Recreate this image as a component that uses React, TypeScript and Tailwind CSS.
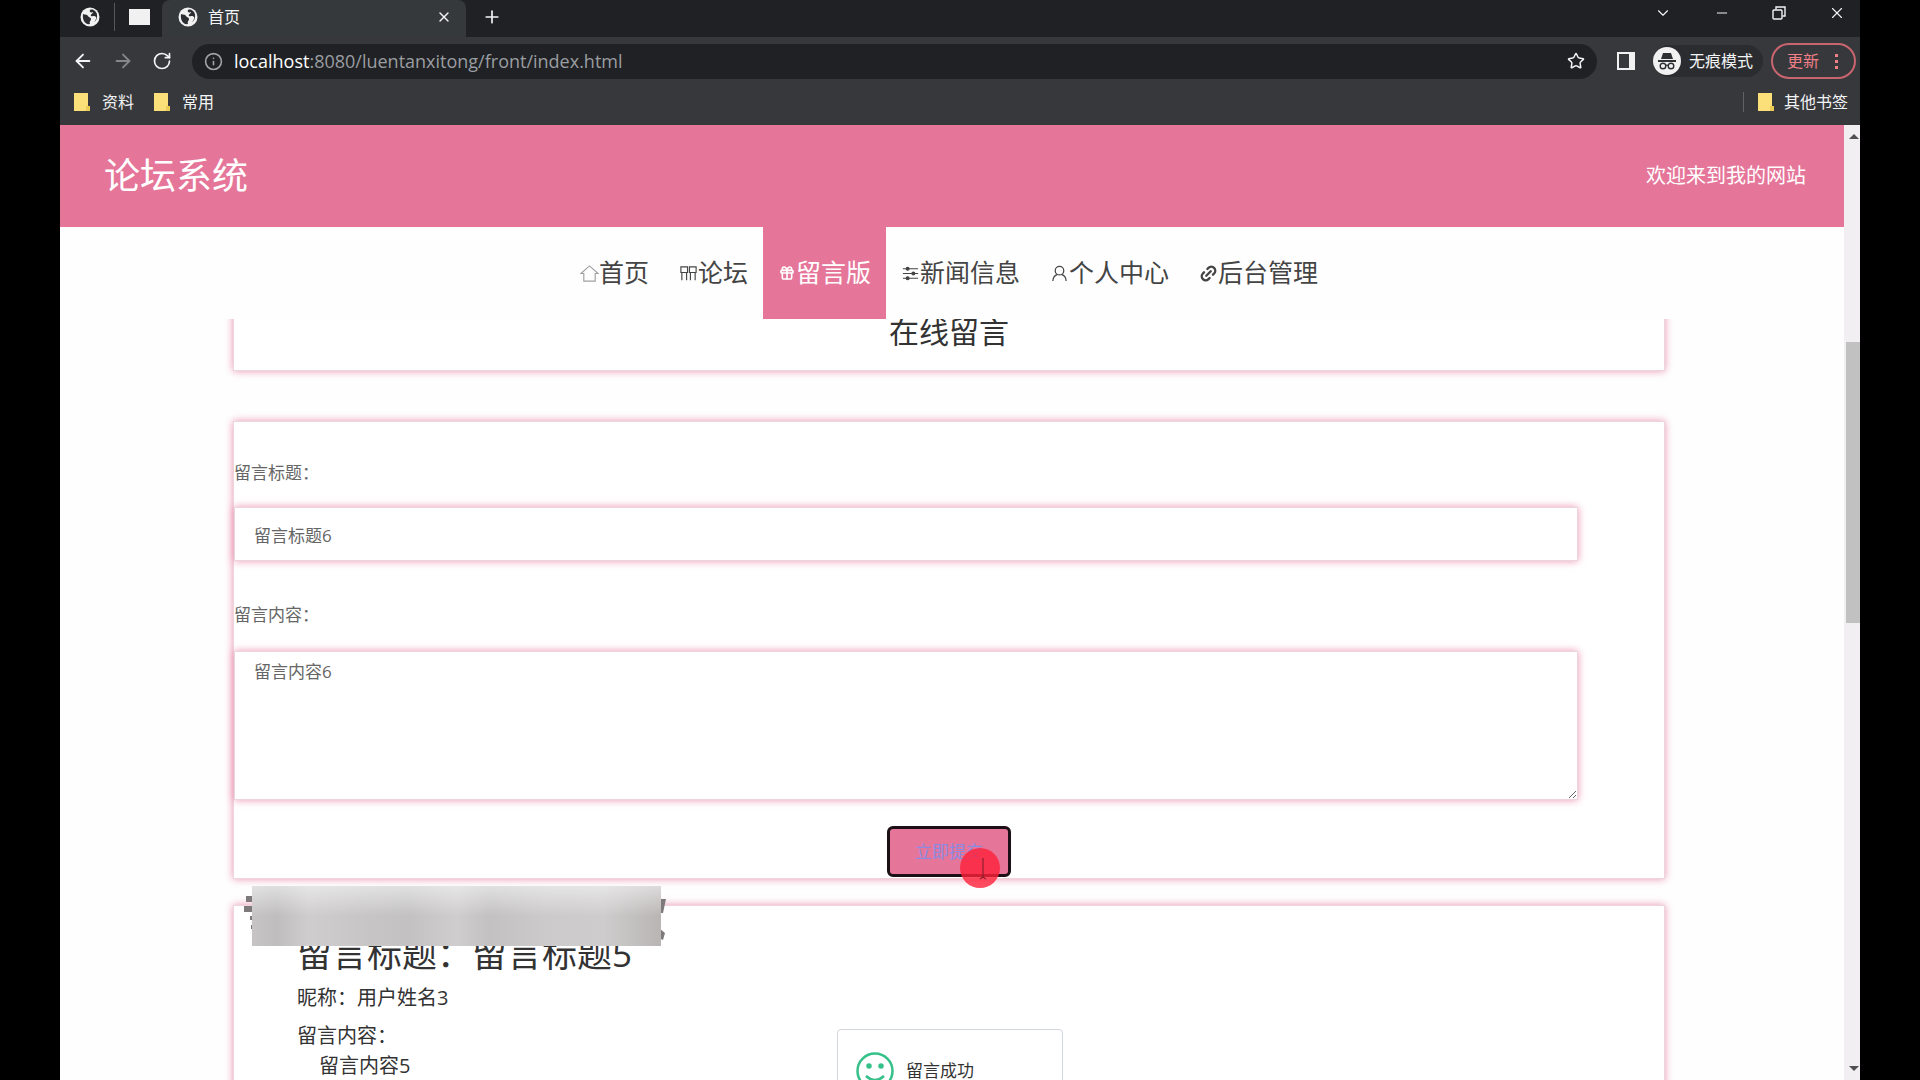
import { useState } from 'react';
import type { ReactNode } from 'react';
import {
  ArrowLeft,
  ArrowRight,
  ChevronDown,
  Gift,
  Info,
  Link2,
  Minus,
  Plus,
  RotateCw,
  Star,
  X,
} from 'lucide-react';

const cardShadow = 'shadow-[0_0_8px_#eb95af] border border-[#ecd5dc]';

function GlobeIcon() {
  return (
    <svg viewBox="0 0 20 20" className="size-5 shrink-0">
      <circle cx="10" cy="10" r="9.5" fill="#f1f1f1" />
      <path d="M3 7c2 1 4 0 5 2s3 1 3 3-2 2-1 5c-4 1-8-3-7-10z" fill="#2b2d30" />
      <path d="M10 3c-1 2 1 3 3 2 0 2-3 2-2 4 2 1 3-1 5 1 1 1-1 4-2 5 4-2 4-9 1-11-1-1-3-2-5-1z" fill="#2b2d30" />
    </svg>
  );
}

function FolderIcon() {
  return (
    <svg viewBox="0 0 16 18" className="h-[18px] w-4 shrink-0">
      <path d="M0 0h14v13h2v5H0z" fill="#fbe07a" />
      <path d="M12 13h4v5h-4z" fill="#eccb55" />
    </svg>
  );
}

function IncognitoIcon() {
  return (
    <svg viewBox="0 0 28 28" className="size-7 shrink-0">
      <circle cx="14" cy="14" r="14" fill="#f1f1f1" />
      <path d="M10 6h8l2 6H8zM5 13h18v2H5z" fill="#2e2f33" />
      <g fill="none" stroke="#2e2f33" strokeWidth="1.4">
        <circle cx="10" cy="19" r="2.8" />
        <circle cx="18" cy="19" r="2.8" />
        <path d="M12.8 18.5q1.2-.8 2.4 0" />
      </g>
    </svg>
  );
}

function RestoreIcon() {
  return (
    <svg viewBox="0 0 14 14" className="size-3.5" fill="none" stroke="currentColor" strokeWidth="1.4">
      <rect x="1" y="4" width="9" height="9" rx="1" />
      <path d="M4 3.5V1h9v9h-2.5" />
    </svg>
  );
}

function HomeIcon() {
  return (
    <svg viewBox="0 0 20 20" className="size-[19px]" fill="none" stroke="#a0a0a0" strokeWidth="1.2">
      <path d="M1 10l9-8 9 8h-3v8H4v-8z" />
    </svg>
  );
}

function ForumIcon() {
  return (
    <svg viewBox="0 0 20 20" className="size-[19px]" fill="none" stroke="currentColor" strokeWidth="1.2">
      <path d="M2 3h7v6H2zM11 3h7v6h-7zM3 9v8M8 9v8M12 9v8M17 9v8" />
    </svg>
  );
}

function SlidersIcon() {
  return (
    <svg viewBox="0 0 20 20" className="size-[19px]" stroke="currentColor" strokeWidth="1.2">
      <path d="M2 5h16M2 10h16M2 15h16" />
      <g fill="currentColor">
        <circle cx="7" cy="5" r="1.5" />
        <circle cx="13" cy="10" r="1.5" />
        <circle cx="7" cy="15" r="1.5" />
      </g>
    </svg>
  );
}

function PersonIcon() {
  return (
    <svg viewBox="0 0 20 20" className="size-[19px]" fill="none" stroke="currentColor" strokeWidth="1.3">
      <circle cx="10" cy="7" r="4.5" />
      <path d="M3 18c0-4 2-6 5-7M17 18c0-4-2-6-5-7" />
    </svg>
  );
}

const navItems: { label: string; icon: ReactNode }[] = [
  { label: '首页', icon: <HomeIcon /> },
  { label: '论坛', icon: <ForumIcon /> },
  { label: '留言版', icon: <Gift className="mx-px size-4" strokeWidth={2.5} /> },
  { label: '新闻信息', icon: <SlidersIcon /> },
  { label: '个人中心', icon: <PersonIcon /> },
  { label: '后台管理', icon: <Link2 className="size-[19px] -rotate-45" strokeWidth={3} /> },
];

function BrowserChrome() {
  return (
    <div className="shrink-0 bg-[#37383b] text-base text-gray-100">
      {/* Tab strip */}
      <div className="flex h-[37px] items-stretch bg-[#202124]">
        <div className="flex w-[102px] items-center pb-1 pl-5">
          <GlobeIcon />
          <span className="ml-3.5 h-7 w-px bg-[#55575b]" />
          <span className="ml-3.5 h-4 w-[21px] bg-[#f1f1f1]" />
        </div>
        <div className="flex w-[304px] items-center rounded-t-lg bg-[#35393b] pr-3.5 pb-1 pl-4">
          <GlobeIcon />
          <span className="ml-2.5 flex-1">首页</span>
          <button aria-label="关闭标签页">
            <X className="size-4" />
          </button>
        </div>
        <button aria-label="新标签页" className="mb-1 ml-4">
          <Plus className="size-5" />
        </button>
        <div className="mb-3 ml-auto flex items-center gap-[42px] pr-3.5">
          <button aria-label="搜索标签页">
            <ChevronDown className="size-[18px]" strokeWidth={1.5} />
          </button>
          <button aria-label="最小化">
            <Minus className="size-4" strokeWidth={1.5} />
          </button>
          <button aria-label="还原">
            <RestoreIcon />
          </button>
          <button aria-label="关闭">
            <X className="size-[18px]" strokeWidth={1.5} />
          </button>
        </div>
      </div>

      {/* Toolbar */}
      <div className="flex h-12 items-center pr-1 pl-3">
        <button aria-label="后退">
          <ArrowLeft className="size-[22px]" />
        </button>
        <button aria-label="前进" className="ml-4.5 text-[#85878a]">
          <ArrowRight className="size-[22px]" />
        </button>
        <button aria-label="刷新" className="ml-4.5">
          <RotateCw className="size-5" />
        </button>
        <div className="ml-5 flex h-[35px] flex-1 items-center rounded-full bg-[#202124] px-3">
          <Info className="size-[19px] text-[#a3a5a8]" />
          <span className="ml-[11px] flex-1 text-lg text-[#9a9da1]">
            <span className="text-white">localhost</span>:8080/luentanxitong/front/index.html
          </span>
          <button aria-label="收藏">
            <Star className="size-[18px]" />
          </button>
        </div>
        <span className="ml-5 h-[18px] w-[18px] border-2 border-r-[6px] border-[#f1f1f1]" />
        <div className="ml-[18px] flex h-8 items-center rounded-full bg-[#2b2c2f] pr-2.5">
          <IncognitoIcon />
          <span className="ml-2">无痕模式</span>
        </div>
        <button className="ml-2 flex h-9 items-center rounded-full border-2 border-[#c9656f] pr-4 pl-3.5 text-[#f07f88]">
          更新
          <span className="ml-4 flex flex-col gap-[3px]">
            <span className="size-[3px] bg-[#f07f88]" />
            <span className="size-[3px] bg-[#f07f88]" />
            <span className="size-[3px] bg-[#f07f88]" />
          </span>
        </button>
      </div>

      {/* Bookmarks */}
      <div className="flex h-10 items-center pr-3 pb-1.5 pl-3.5">
        <FolderIcon />
        <span className="mr-5 ml-3">资料</span>
        <FolderIcon />
        <span className="ml-3">常用</span>
        <span className="mr-3.5 ml-auto h-5 w-px bg-[#5f6165]" />
        <FolderIcon />
        <span className="ml-2.5">其他书签</span>
      </div>
    </div>
  );
}

function MessageForm() {
  const [title, setTitle] = useState('留言标题6');
  const [content, setContent] = useState('留言内容6');

  return (
    <form
      onSubmit={(e) => e.preventDefault()}
      className={`mt-[50px] flex h-[458px] flex-col bg-white pt-[35px] text-[17px] text-[#666] ${cardShadow}`}
    >
      <label htmlFor="title" className="leading-8">
        留言标题：
      </label>
      <input
        id="title"
        value={title}
        onChange={(e) => setTitle(e.target.value)}
        className={`mt-[18px] mr-[86px] h-[54px] px-[19px] outline-none ${cardShadow}`}
      />
      <label htmlFor="content" className="mt-[38px] leading-8">
        留言内容：
      </label>
      <textarea
        id="content"
        value={content}
        onChange={(e) => setContent(e.target.value)}
        className={`mt-5 mr-[86px] h-[149px] resize-y px-[19px] py-2 leading-6 outline-none ${cardShadow}`}
      />
      <div className="relative mx-auto mt-[26px]">
        <button className="h-[51px] w-[124px] rounded-md border-[3px] border-[#1c0f16] bg-[#e5769a] text-[#8c8ae0]">
          立即提交
        </button>
        {/* Click highlight with the text cursor in it */}
        <svg viewBox="0 0 40 40" className="absolute top-[22px] left-[73px] size-10">
          <circle cx="20" cy="20" r="20" fill="#ff2038" fillOpacity=".8" />
          <path d="M23 10v20M20 31l3-2 3 2" fill="none" stroke="#8c2030" strokeWidth="1.2" />
        </svg>
      </div>
    </form>
  );
}

export default function App() {
  return (
    <div className="h-screen overflow-hidden bg-black px-15 font-['Open_Sans','Noto_Sans_CJK_SC',sans-serif]">
      <div className="flex h-full flex-col bg-[#fefefe]">
        <BrowserChrome />

        <div className="flex min-h-0 flex-1">
          <div className="flex min-w-0 flex-1 flex-col">
            <header className="flex h-[102px] shrink-0 items-center justify-between bg-[#e5769a] pr-[38px] pl-11 text-white">
              <h1 className="text-4xl">论坛系统</h1>
              <span className="text-xl">欢迎来到我的网站</span>
            </header>

            <nav className="flex h-[92px] shrink-0 justify-center pr-1.5 text-[25px] text-[#444]">
              {navItems.map((item) => (
                <a
                  key={item.label}
                  href="#"
                  className={`flex items-center px-[15px] ${item.label === '留言版' ? 'bg-[#e5769a] text-white' : ''}`}
                >
                  {item.icon}
                  {item.label}
                </a>
              ))}
            </nav>

            <main className="min-h-0 flex-1 overflow-hidden pr-[179px] pl-[173px]">
              <div className={`-mt-10 bg-white pt-8 pb-[18px] text-center ${cardShadow}`}>
                <h2 className="text-3xl leading-10 text-[#333]">在线留言</h2>
              </div>

              <MessageForm />

              <section className={`relative mt-[26px] h-[300px] bg-white pt-6 pl-[63px] text-xl text-[#333] ${cardShadow}`}>
                <h3 className="text-[35px] leading-12">留言标题：留言标题5</h3>
                <p className="mt-1 leading-8">昵称：用户姓名3</p>
                <p className="mt-1.5 leading-8">留言内容：</p>
                <p className="pl-[22px] leading-7">留言内容5</p>
                {/* Covered watermark */}
                <svg viewBox="0 0 425 60" className="absolute -top-5 left-2.5 h-[60px] w-[425px]">
                  <defs>
                    <linearGradient id="cover">
                      <stop offset="0" stopColor="#c6c4c4" />
                      <stop offset=".06" stopColor="#bfbdbd" />
                      <stop offset=".14" stopColor="#cfcdcd" />
                      <stop offset=".26" stopColor="#c8c6c6" />
                      <stop offset=".38" stopColor="#c3c1c1" />
                      <stop offset=".5" stopColor="#cfcdcd" />
                      <stop offset=".58" stopColor="#c3c1c1" />
                      <stop offset=".72" stopColor="#cccaca" />
                      <stop offset=".86" stopColor="#cecccc" />
                      <stop offset="1" stopColor="#b9b5b5" />
                    </linearGradient>
                    <linearGradient id="fade" x1="0" x2="0" y1="0" y2="1">
                      <stop offset="0" stopColor="#fff" stopOpacity=".5" />
                      <stop offset=".5" stopColor="#fff" stopOpacity="0" />
                    </linearGradient>
                  </defs>
                  <path d="M2 10h8v6H2zM0 20h10v6H0zM6 30h3v4H6zM7 39h3v4H7zM415 13h7l-3 14h-4zM415 42l6 5-2 7-4-2z" fill="#7e797b" />
                  <path d="M8 0h409v60H8z" fill="url(#cover)" />
                  <path d="M8 0h409v60H8z" fill="url(#fade)" />
                </svg>
              </section>
            </main>
          </div>

          {/* Scrollbar */}
          <div className="flex w-4 flex-col items-end bg-[#f1eff1] py-2">
            <svg viewBox="0 0 10 6" className="mr-px h-1.5 w-2.5">
              <path d="M0 6l5-5 5 5z" fill="#505050" />
            </svg>
            <div className="mt-[203px] h-[281px] w-3.5 bg-[#c2c1c1]" />
            <svg viewBox="0 0 10 6" className="mt-auto mr-px h-1.5 w-2.5">
              <path d="M0 0l5 5 5-5z" fill="#505050" />
            </svg>
          </div>
        </div>
      </div>

      {/* Result message */}
      <div className="fixed top-[1029px] left-[837px] flex h-[84px] w-[226px] items-center rounded-sm border border-gray-300 bg-white pl-[18px] text-[17px] text-[#333]">
        <svg viewBox="0 0 38 38" className="size-[38px]" fill="none" stroke="#36c08a" strokeWidth="2.5">
          <circle cx="19" cy="19" r="17.5" />
          <path d="M10 24q9 8 18 0" />
          <circle cx="13" cy="14" r="1.5" fill="#36c08a" />
          <circle cx="25" cy="14" r="1.5" fill="#36c08a" />
        </svg>
        <span className="ml-3">留言成功</span>
      </div>
    </div>
  );
}
